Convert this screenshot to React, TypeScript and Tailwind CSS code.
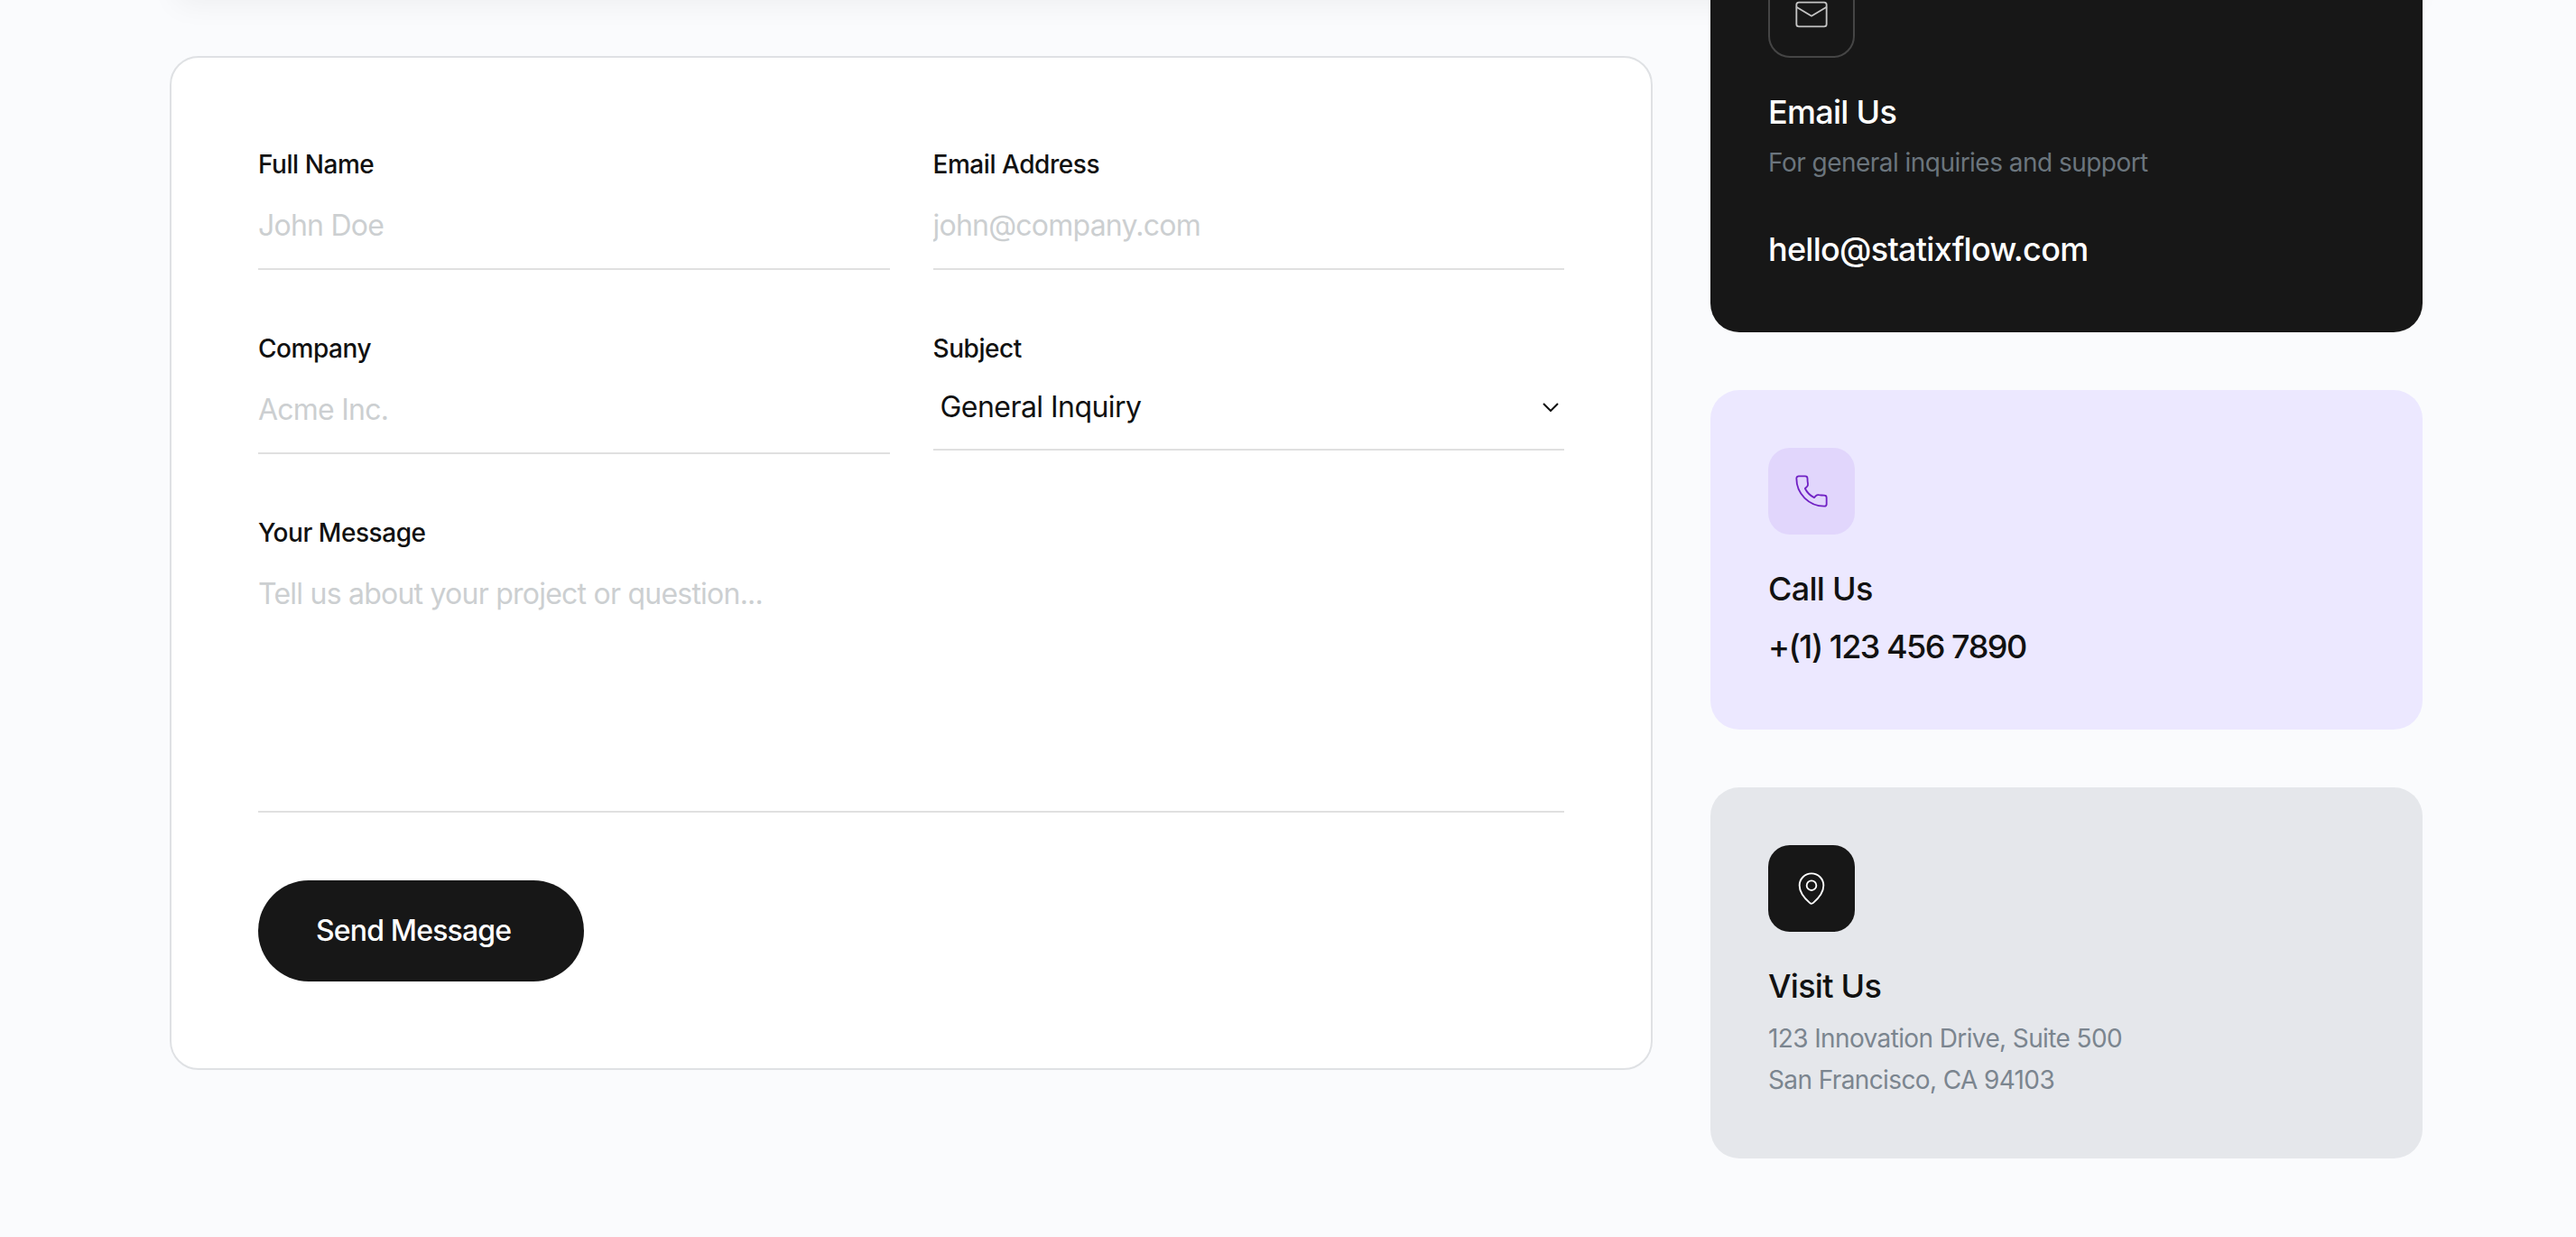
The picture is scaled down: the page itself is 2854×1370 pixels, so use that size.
import { useState, type ReactNode } from 'react'
import { clsx } from 'clsx'

interface FieldProps {
  label: string
  children: ReactNode
  className?: string
}

function Field({ label, children, className }: FieldProps) {
  return (
    <div className={clsx('flex flex-col pt-[3px]', className)}>
      <label className="text-[28px] leading-[38px] font-medium tracking-[-0.016em] text-[#111111]">{label}</label>
      {children}
    </div>
  )
}

interface TextInputProps {
  placeholder: string
  type?: string
}

function TextInput({ placeholder, type = 'text' }: TextInputProps) {
  return (
    <input
      type={type}
      placeholder={placeholder}
      className="h-[98px] w-full border-b-2 border-[#e0e0e0] bg-transparent text-[32px] tracking-[-0.024em] outline-none placeholder:text-[#cccfd1]"
    />
  )
}

function Icon({ children }: { children: ReactNode }) {
  return (
    <svg
      width="40"
      height="40"
      viewBox="0 0 24 24"
      fill="none"
      stroke="currentColor"
      strokeWidth="1.1"
      strokeLinecap="round"
      strokeLinejoin="round"
    >
      {children}
    </svg>
  )
}

function MailIcon() {
  return (
    <Icon>
      <rect x="2" y="4" width="20" height="16" rx="1.6" />
      <path d="M2.2 7.2 12 13l9.8-5.800" />
    </Icon>
  )
}

function PhoneIcon() {
  return (
    <Icon>
      <path d="M3.6 2h4.2a1.5 1.5 0 0 1 1.5 1.500c0 1.400.1 2.500.3 3.500.2 1-.1 1.500-.7 2.100L7.700 10.200c1.300 2.600 3.400 4.700 6.100 6.100l1.100-1.200c.6-.6 1.200-.8 2-.6 1.200.2 2.300.3 3.600.3A1.500 1.500 0 0 1 22 16.300v4.200A1.500 1.500 0 0 1 20.500 22C10.300 22 2 13.700 2 3.500A1.500 1.500 0 0 1 3.600 2Z" />
    </Icon>
  )
}

function PinIcon() {
  return (
    <Icon>
      <path d="M20 10c0 4.800-4.300 9.300-6.800 11.500a1.800 1.800 0 0 1-2.400 0C8.300 19.300 4 14.800 4 10a8 8 0 0 1 16 0Z" />
      <circle cx="12" cy="10" r="3.200" />
    </Icon>
  )
}

interface InfoCardProps {
  icon: ReactNode
  title: string
  className: string
  iconClassName: string
  children: ReactNode
}

function InfoCard({ icon, title, className, iconClassName, children }: InfoCardProps) {
  return (
    <div className={clsx('rounded-[32px] p-16', className)}>
      <div className={clsx('flex h-24 w-24 items-center justify-center rounded-3xl', iconClassName)}>{icon}</div>
      <h3 className="mt-8 text-[36px] leading-[56px] font-medium tracking-[-0.02em]">{title}</h3>
      {children}
    </div>
  )
}

export default function App() {
  const [subject, setSubject] = useState('General Inquiry')

  return (
    <main className="h-[1370px] w-full overflow-hidden bg-[#fafbfd] font-['Inter',sans-serif] text-[#111111]">
      {/* section above, only its shadow reaches down here */}
      <div className="-mt-40 ml-[188px] h-40 w-[2496px] shadow-[0_12px_32px_-8px_rgba(0,0,0,0.055)]" />

      <div className="flex items-start gap-16 pl-[188px]">
        <form
          className="mt-[62px] h-[1123px] w-[1643px] shrink-0 rounded-[32px] border-2 border-[#dfe1e4] bg-white p-24"
          onSubmit={(e) => e.preventDefault()}
        >
          <div className="grid grid-cols-2 gap-x-12">
            <Field label="Full Name" className="h-[204px]">
              <TextInput placeholder="John Doe" />
            </Field>
            <Field label="Email Address" className="h-[204px]">
              <TextInput type="email" placeholder="john@company.com" />
            </Field>
            <Field label="Company" className="h-[204px]">
              <TextInput placeholder="Acme Inc." />
            </Field>
            <Field label="Subject" className="h-[204px]">
              <div className="flex h-[94px] items-center border-b-2 border-[#e0e0e0]">
                <select
                  value={subject}
                  onChange={(e) => setSubject(e.target.value)}
                  className="flex-1 appearance-none bg-transparent pl-2 text-[32px] tracking-[-0.017em] outline-none"
                >
                  <option>General Inquiry</option>
                  <option>Sales</option>
                  <option>Support</option>
                </select>
                <svg className="mr-1.5" width="18" height="10" viewBox="0 0 18 10" fill="none" stroke="currentColor" strokeWidth="2">
                  <path d="m1 1 8 8 8-8" />
                </svg>
              </div>
            </Field>
          </div>
          <Field label="Your Message">
            <textarea
              placeholder="Tell us about your project or question..."
              className="h-[291px] w-full resize-none border-b-2 border-[#e0e0e0] bg-transparent pt-[25px] text-[32px] leading-[48px] tracking-[-0.024em] outline-none placeholder:text-[#cccfd1]"
            />
          </Field>
          <button className="mt-[75px] flex h-28 w-[361px] items-center rounded-full bg-[#171717] pl-16 text-[32px] font-medium tracking-[-0.026em] text-white">
            Send Message
          </button>
        </form>

        <aside className="-mt-24 flex w-[789px] shrink-0 flex-col gap-16">
          <InfoCard
            icon={<MailIcon />}
            title="Email Us"
            className="h-[464px] bg-[#171717] text-white"
            iconClassName="border-2 border-[#454545] text-[#c4c4c4]"
          >
            <p className="text-[28px] leading-[56px] tracking-[-0.019em] text-[#6b757d]">For general inquiries and support</p>
            <p className="mt-10 text-[36px] leading-[56px] font-medium tracking-[-0.02em]">hello@statixflow.com</p>
          </InfoCard>
          <InfoCard
            icon={<PhoneIcon />}
            title="Call Us"
            className="h-[376px] bg-[#ece8ff]"
            iconClassName="bg-[#e1d6fc] text-[#7021c4]"
          >
            <p className="mt-2 text-[36px] leading-[56px] font-medium tracking-[-0.042em]">+(1) 123 456 7890</p>
          </InfoCard>
          <InfoCard
            icon={<PinIcon />}
            title="Visit Us"
            className="h-[411px] bg-[#e5e7eb]"
            iconClassName="bg-[#171717] text-white"
          >
            <p className="mt-[7px] text-[28px] leading-[46px] tracking-[-0.022em] text-[#7b858f]">
              123 Innovation Drive, Suite 500
              <br />
              San Francisco, CA 94103
            </p>
          </InfoCard>
        </aside>
      </div>
    </main>
  )
}
